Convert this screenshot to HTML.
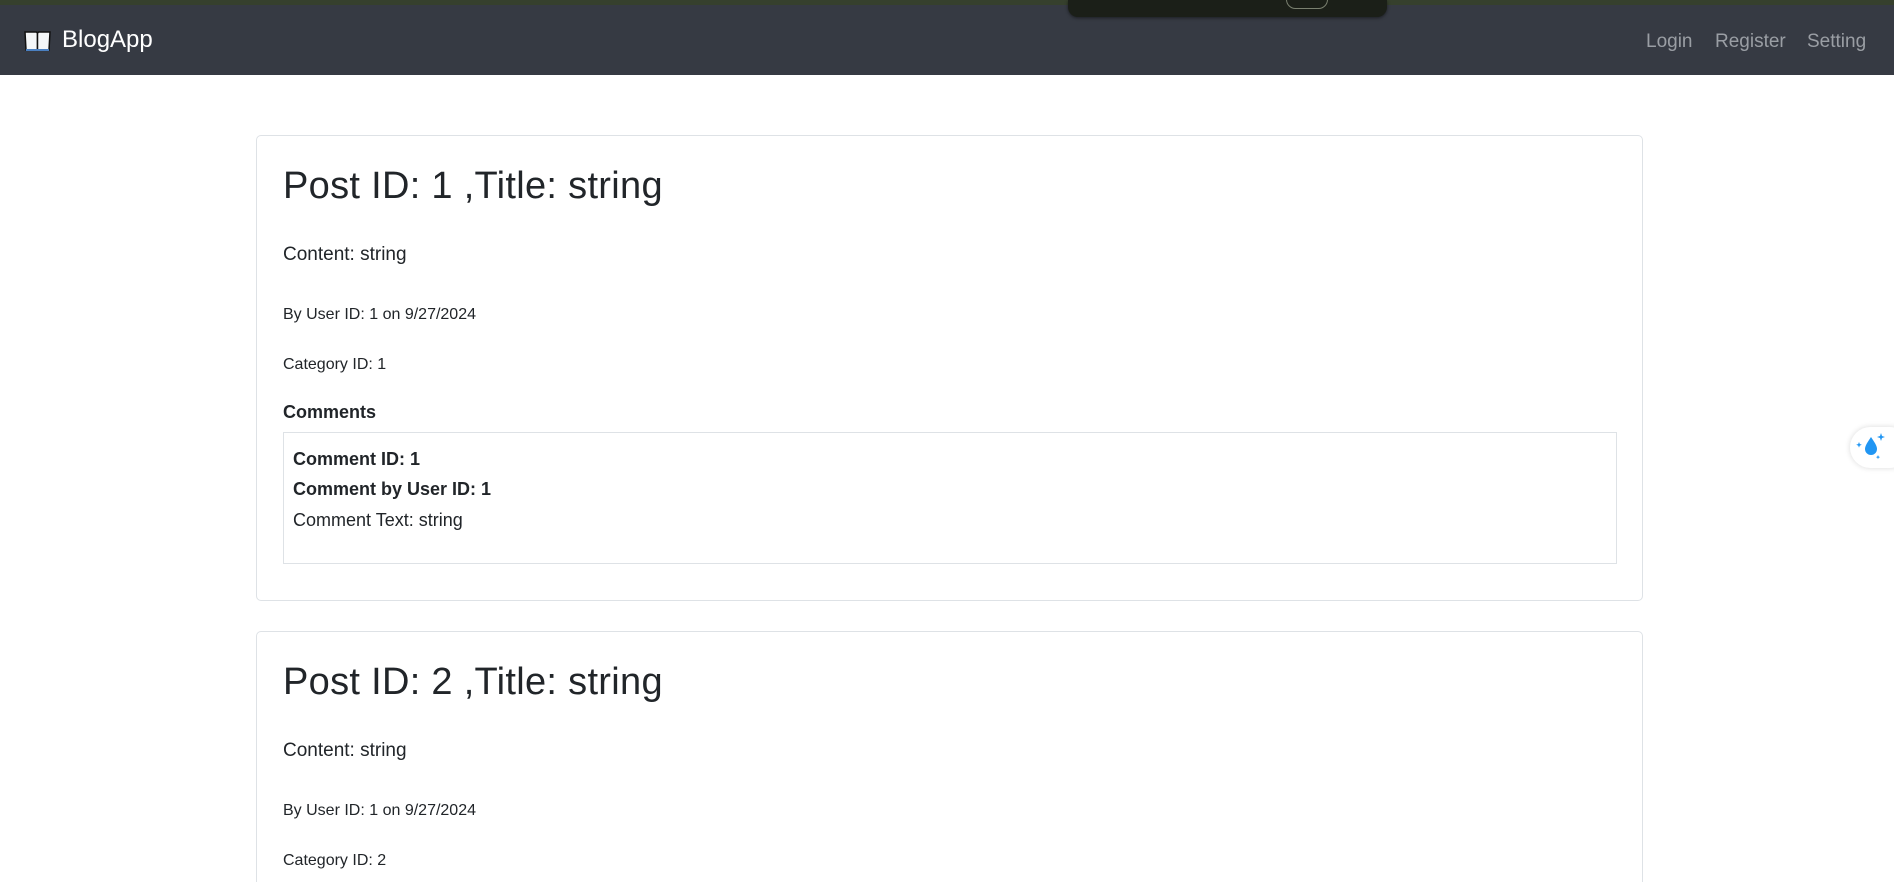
<!DOCTYPE html>
<html><head><meta charset="utf-8">
<style>
*{margin:0;padding:0;box-sizing:border-box}
html,body{width:1894px;height:882px;overflow:hidden;background:#fff;font-family:"Liberation Sans",sans-serif;color:#212529}
#w{position:relative;width:1894px;height:882px;overflow:hidden}
.top{position:absolute;left:0;top:0;width:1894px;height:5px;background:#36402d}
.nav{position:absolute;left:0;top:5px;width:1894px;height:70px;background:#363a43}
.pop{position:absolute;left:1068px;top:0;width:319px;height:17px;background:#1b1f18;border-radius:0 0 10px 10px;box-shadow:0 1px 3px rgba(0,0,0,.5)}
.pop i{position:absolute;left:218px;top:-10px;width:42px;height:19px;border:1px solid #7a8070;border-radius:10px}
.brand{position:absolute;left:62px;top:26px;font-size:24px;color:#fff}
.book{position:absolute;left:24px;top:30px}
.links{position:absolute;top:31px;font-size:19px;color:#9a9ea4}
.card{position:absolute;left:256px;width:1387px;border:1px solid #dee2e6;border-radius:5px}
.t{position:absolute;left:283px;font-size:38px;color:#212529;letter-spacing:0.3px}
.p{position:absolute;left:283px;font-size:19px}
.s{position:absolute;left:283px;font-size:16px}
.cbox{position:absolute;left:283px;top:432px;width:1334px;height:132px;border:1px solid #dee2e6}
.c{position:absolute;left:293px;font-size:18px}
.fab{position:absolute;left:1850px;top:427px;width:60px;height:41px;background:#fff;border-radius:21px;box-shadow:0 0 6px rgba(0,0,0,.15)}
</style></head><body><div id="w">
<div class="top"></div>
<div class="nav"></div>
<div class="pop"><i></i></div>
<svg class="book" width="27" height="22" viewBox="0 0 27 22"><path d="M1 2h11c1 0 1.5 1 1.5 2v16H2z" fill="#f4f6f8" stroke="#111" stroke-width="1.5"/><path d="M26 2H15c-1 0-1.5 1-1.5 2v16H25z" fill="#f4f6f8" stroke="#111" stroke-width="1.5"/><path d="M2 20h23" stroke="#4a7fc0" stroke-width="2"/></svg>
<div class="brand">BlogApp</div>
<div class="links" style="left:1646px">Login</div>
<div class="links" style="left:1715px">Register</div>
<div class="links" style="left:1807px">Setting</div>

<div class="card" style="top:135px;height:466px"></div>
<div class="t" style="top:165px">Post ID: 1 ,Title: string</div>
<div class="p" style="top:244px">Content: string</div>
<div class="s" style="top:306px">By User ID: 1 on 9/27/2024</div>
<div class="s" style="top:356px">Category ID: 1</div>
<div class="p" style="top:402px;font-weight:bold;font-size:18px">Comments</div>
<div class="cbox"></div>
<div class="c" style="top:449px;font-weight:bold">Comment ID: 1</div>
<div class="c" style="top:479px;font-weight:bold">Comment by User ID: 1</div>
<div class="c" style="top:510px">Comment Text: string</div>

<div class="card" style="top:631px;height:270px"></div>
<div class="t" style="top:661px">Post ID: 2 ,Title: string</div>
<div class="p" style="top:740px">Content: string</div>
<div class="s" style="top:802px">By User ID: 1 on 9/27/2024</div>
<div class="s" style="top:852px">Category ID: 2</div>

<div class="fab"><svg width="44" height="41" viewBox="0 0 44 41"><path d="M21 10c-4 6-6 9-6 12a6 6 0 0 0 12 0c0-3-2-6-6-12z" fill="#2196f3"/><path d="M31 6l1 3 3 1-3 1-1 3-1-3-3-1 3-1z M9 15l.8 2 2 .8-2 .8-.8 2-.8-2-2-.8 2-.8z M28 28l.6 1.5 1.5.6-1.5.6-.6 1.5-.6-1.5-1.5-.6 1.5-.6z" fill="#2196f3"/></svg></div>
</div></body></html>
